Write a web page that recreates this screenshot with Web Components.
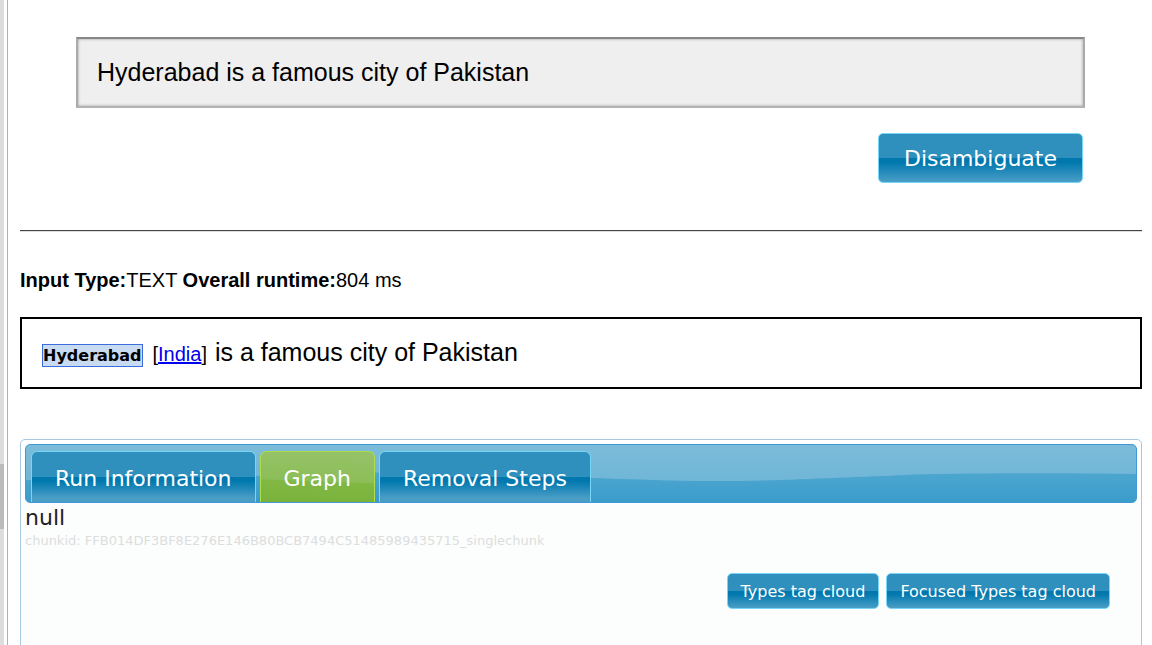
<!DOCTYPE html>
<html lang="en">
<head>
<meta charset="utf-8">
<title>Disambiguation</title>
<style>
html, body { margin: 0; height: 100%; }
body { font-family: "Liberation Sans", Arial, sans-serif; color: #000; background: #fff; overflow: hidden; }
.runtime { margin: 0; padding: 36px 0 24px; font-size: 20px; line-height: 26px; }
</style>
</head>
<body>
<app-frame>
  <query-form></query-form>
  <p class="runtime"><b>Input Type:</b>TEXT <b>Overall runtime:</b>804 ms</p>
  <result-box>
    <entity-mark slot="entity">Hyderabad</entity-mark>
    <a slot="sense" href="#india">India</a>
    is a famous city of Pakistan
  </result-box>
  <tab-panel>
    <tab-item slot="tab">Run Information</tab-item>
    <tab-item slot="tab" active>Graph</tab-item>
    <tab-item slot="tab">Removal Steps</tab-item>
    <graph-view></graph-view>
  </tab-panel>
</app-frame>

<script>
const define = (name, html, setup) => {
  const template = document.createElement('template');
  template.innerHTML = html;
  customElements.define(name, class extends HTMLElement {
    constructor() {
      super();
      this.attachShadow({ mode: 'open' }).append(template.content.cloneNode(true));
    }
    connectedCallback() { if (setup) setup(this); }
  });
};

define('app-frame', `
<style>
:host { display: grid; grid-template-columns: 4px 3px minmax(0, 1fr); height: 100%; }
.track { background: #ddd; display: grid; grid-template-rows: 464fr 65fr 116fr; }
.thumb { grid-row: 2; background: #bbb; }
main { grid-column: 3; border-left: 1px solid #b0b0b0; padding: 37px 10px 0 12px; overflow: hidden; }
</style>
<div class="track"><div class="thumb"></div></div>
<main><slot></slot></main>`);

define('glossy-button', `
<style>
:host { display: block; }
button { display: block; font: 16px/22px "DejaVu Sans", Verdana, sans-serif; font-size: var(--size, 16px);
  color: #fff; padding: var(--pad, 7px 13px 5px); margin: 0; border: 1px solid #77d5f7; border-radius: 5px; cursor: pointer;
  background: linear-gradient(#2f90be 0, #2f90be 50%, #0078ae 50%, #0078ae 58%, #4a9ec6 100%); white-space: nowrap; }
</style>
<button type="button"><slot></slot></button>`);

define('query-form', `
<style>
:host { display: block; border-bottom: 1px solid #444; box-shadow: 0 1px 0 #ddd; padding: 0 57px 47px 56px; }
form { display: flex; flex-direction: column; align-items: flex-end; gap: 25px; margin: 0; }
textarea { box-sizing: border-box; width: 100%; height: 71px; margin: 0; padding: 17px 19px; resize: none; overflow: hidden;
  font: 25px/32px "Liberation Sans", Arial, sans-serif; color: #000; background: #efefef; border: 2px solid;
  border-color: #888 #aaa #b4b4b4 #aaa; border-radius: 0; box-shadow: inset 0 0 3px #999; outline: 0; }
glossy-button { --size: 22px; --pad: 14px 25px 12px; margin-right: 2px; }
</style>
<form>
  <textarea aria-label="Text to disambiguate">Hyderabad is a famous city of Pakistan</textarea>
  <glossy-button>Disambiguate</glossy-button>
</form>`);

define('entity-mark', `
<style>
:host { display: inline-block; font: bold 16px/21px "DejaVu Sans", Verdana, sans-serif; border: 1px solid #3b6edc; background: #c9dbf1; }
</style><slot></slot>`);

define('result-box', `
<style>
:host { display: block; border: 2px solid #000; padding: 17px 20px; font-size: 25px; line-height: 32px; }
.sense { font-size: 20px; margin: 0 1px 0 3px; }
::slotted(a) { color: #00e; text-decoration: underline; }
</style>
<slot name="entity"></slot> <span class="sense">[<slot name="sense"></slot>]</span> <slot></slot>`);

define('tab-item', `
<style>
:host { display: block; }
a { display: block; padding: 13px 23px 9px; font: 22px/28px "DejaVu Sans", Verdana, sans-serif; color: #fff; text-decoration: none;
  border: 1px solid #77d5f7; border-bottom: 0; border-radius: 6px 6px 0 0; white-space: nowrap;
  background: linear-gradient(#2f90be 0, #2f90be 50%, #0078ae 50%, #0078ae 58%, #4a9ec6 92%); }
:host([active]) a { border-color: #acdd4a; background: linear-gradient(182deg, #96c268 0, #8cbe58 57%, #80b843 59%, #79b23b 100%); }
</style>
<a href="#" role="tab"><slot></slot></a>`, el => {
  el.shadowRoot.querySelector('a').setAttribute('aria-selected', el.hasAttribute('active'));
});

define('tab-panel', `
<style>
:host { display: block; box-sizing: border-box; margin-top: 50px; min-height: 260px; padding: 4px; border: 1px solid #a6c9e2; border-radius: 5px; background: linear-gradient(#fff 0, #fff 58px, #fcfefd 58px); }
nav { position: relative; display: flex; gap: 4px; padding: 6px 5px 0; border: 1px solid #4297d7; border-radius: 5px;
  background: linear-gradient(#7cbcda, #68b2d4); overflow: hidden; }
svg { position: absolute; inset: 0; width: 100%; height: 100%; }
::slotted(tab-item) { position: relative; }
</style>
<nav role="tablist">
  <svg viewBox="0 0 1110 57" preserveAspectRatio="none" aria-hidden="true">
    <defs><linearGradient id="g" x1="0" y1="28" x2="0" y2="57" gradientUnits="userSpaceOnUse"><stop offset="0" stop-color="#4da6cf"/><stop offset="1" stop-color="#3b9cca"/></linearGradient></defs>
    <path fill="url(#g)" d="M0 35C90 39 150 35 230 31S340 27 400 28C460 29 500 31 565 33S640 36 695 36S830 32 880 30S1040 28 1110 29V57H0Z"/>
  </svg>
  <slot name="tab"></slot>
</nav>
<section><slot></slot></section>`);

define('graph-view', `
<style>
:host { display: block; font-family: "DejaVu Sans", Verdana, sans-serif; color: #222; }
p { margin: 0; font-size: 22px; line-height: 30px; }
.chunk { font-size: 13px; line-height: 16px; color: #ddd; }
.actions { display: flex; justify-content: flex-end; gap: 7px; padding: 24px 27px 0 0; }
</style>
<p>null</p>
<p class="chunk">chunkid: FFB014DF3BF8E276E146B80BCB7494C51485989435715_singlechunk</p>
<div class="actions">
  <glossy-button>Types tag cloud</glossy-button>
  <glossy-button>Focused Types tag cloud</glossy-button>
</div>`);
</script>
</body>
</html>
